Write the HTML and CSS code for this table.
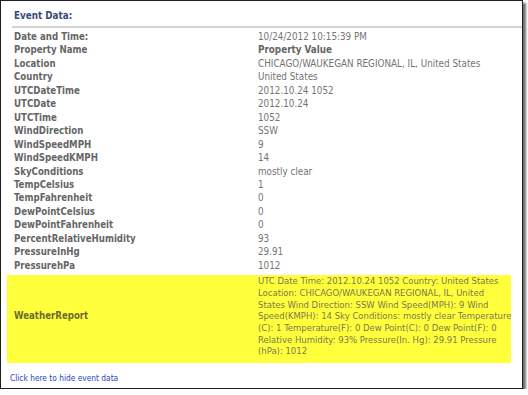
FILE: index.html
```html
<!DOCTYPE html>
<html lang="en">
<head>
  <meta charset="UTF-8">
  <title>Event Data</title>
  <link rel="stylesheet" href="styles.css">
</head>
<body>
  <div class="frame">
    <h3 class="heading">Event Data:</h3>

    <!-- event properties -->
    <div class="props">
      <div class="row"><span class="name">Date and Time:</span><span class="value">10/24/2012 10:15:39 PM</span></div>
      <div class="row"><span class="name">Property Name</span><span class="value head">Property Value</span></div>
      <div class="row"><span class="name">Location</span><span class="value">CHICAGO/WAUKEGAN REGIONAL, IL, United States</span></div>
      <div class="row"><span class="name">Country</span><span class="value">United States</span></div>
      <div class="row"><span class="name">UTCDateTime</span><span class="value">2012.10.24 1052</span></div>
      <div class="row"><span class="name">UTCDate</span><span class="value">2012.10.24</span></div>
      <div class="row"><span class="name">UTCTime</span><span class="value">1052</span></div>
      <div class="row"><span class="name">WindDirection</span><span class="value">SSW</span></div>
      <div class="row"><span class="name">WindSpeedMPH</span><span class="value">9</span></div>
      <div class="row"><span class="name">WindSpeedKMPH</span><span class="value">14</span></div>
      <div class="row"><span class="name">SkyConditions</span><span class="value">mostly clear</span></div>
      <div class="row"><span class="name">TempCelsius</span><span class="value">1</span></div>
      <div class="row"><span class="name">TempFahrenheit</span><span class="value">0</span></div>
      <div class="row"><span class="name">DewPointCelsius</span><span class="value">0</span></div>
      <div class="row"><span class="name">DewPointFahrenheit</span><span class="value">0</span></div>
      <div class="row"><span class="name">PercentRelativeHumidity</span><span class="value">93</span></div>
      <div class="row"><span class="name">PressureInHg</span><span class="value">29.91</span></div>
      <div class="row"><span class="name">PressurehPa</span><span class="value">1012</span></div>
      <div class="row report">
        <span class="name">WeatherReport</span>
        <span class="value">UTC Date Time: 2012.10.24 1052 Country: United States Location: CHICAGO/WAUKEGAN REGIONAL, IL, United States Wind Direction: SSW Wind Speed(MPH): 9 Wind Speed(KMPH): 14 Sky Conditions: mostly clear Temperature (C): 1 Temperature(F): 0 Dew Point(C): 0 Dew Point(F): 0 Relative Humidity: 93% Pressure(In. Hg): 29.91 Pressure (hPa): 1012</span>
      </div>
    </div>

    <a class="toggle" href="#">Click here to hide event data</a>
  </div>
</body>
</html>
```

FILE: styles.css
```css
/* base */
body {
  margin: 0;
  background-color: #ffffff;
  font-family: "DejaVu Sans Condensed", "DejaVu Sans", sans-serif;
  font-size: 9.8px;
}
.frame {
  width: 521px;
  height: 387px;
  border: 1px solid #1e1e1e;
  box-shadow: 3px 3px 2px rgba(0, 0, 0, 0.55);
  background-color: #ffffff;
  box-sizing: content-box;
}
.heading {
  margin: 8px 0 0 11px;
  padding: 0 0 4px 2px;
  font-size: 9.8px;
  font-weight: bold;
  color: #3c4878;
  border-bottom: 2px solid #d4d4d4;
  line-height: 13px;
}

/* property list */
.props {
  margin: 2px 11px 0 6px;
}
.row {
  display: grid;
  grid-template-columns: 251px 255px;
  line-height: 13.45px;
  color: #747474;
}
.row .name {
  padding-left: 7px;
  font-size: 9.6px;
  font-weight: bold;
  color: #666666;
}
.row .head {
  font-weight: bold;
  color: #666666;
}
.row.report {
  margin-top: 3px;
  padding-bottom: 6px;
  background-color: #ffff3c;
  line-height: 11.7px;
  align-items: center;
  font-size: 9.45px;
  color: #7a7a4c;
}
.row.report .name {
  font-size: 9.6px;
  color: #6c6c30;
}

/* link */
.toggle {
  display: inline-block;
  margin: 10px 0 0 9px;
  font-size: 8.3px;
  color: #2a44c0;
  text-decoration: none;
}
```
